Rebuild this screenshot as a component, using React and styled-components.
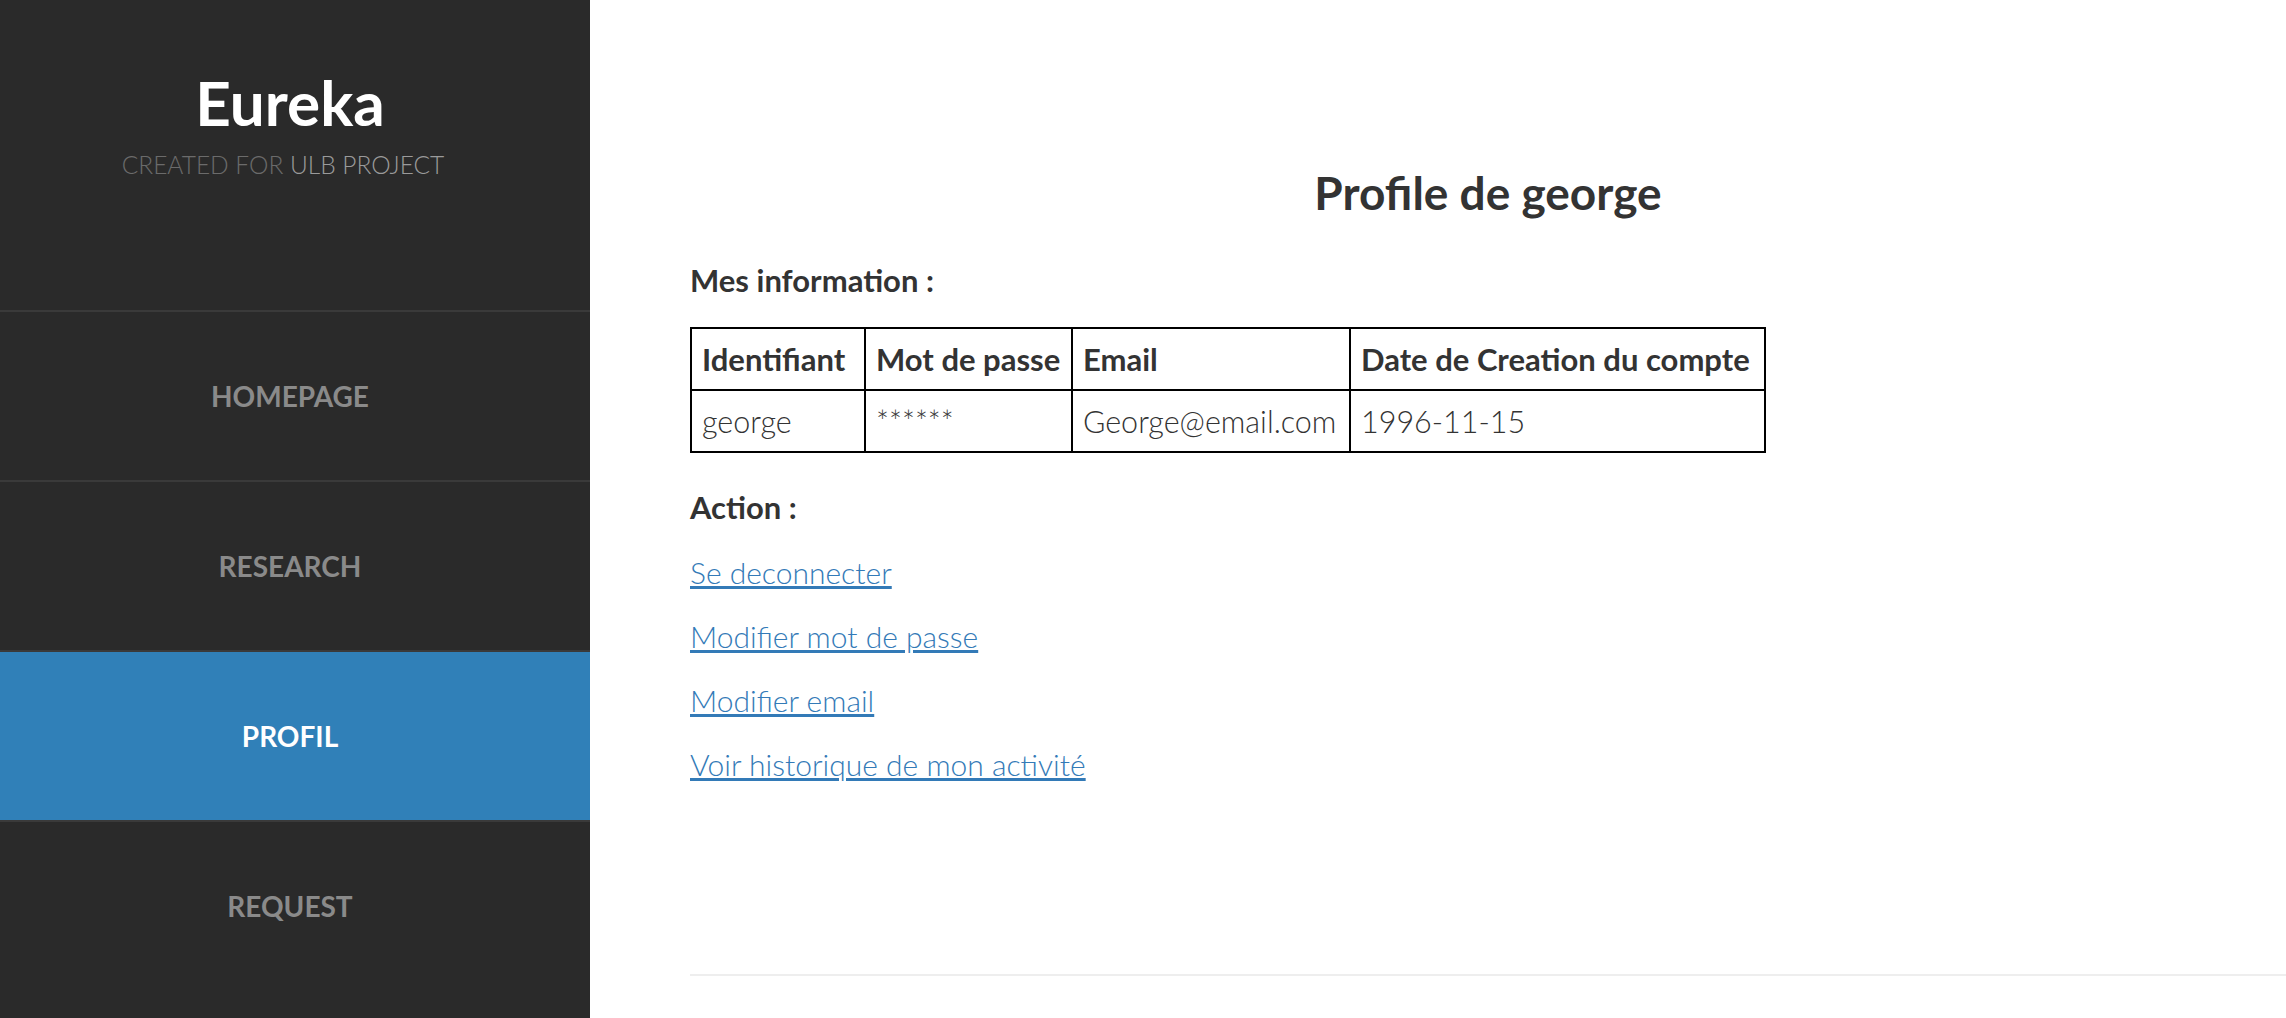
import React from 'react';
import styled, { createGlobalStyle } from 'styled-components';

const GlobalStyle = createGlobalStyle`
    html, body {
        margin: 0;
        padding: 0;
        background: #fff;
        font-family: 'Lato', 'Liberation Sans', sans-serif;
        color: #333;
    }

    * {
        box-sizing: border-box;
    }
`;

const navItems = ['Homepage', 'Research', 'Profil', 'Request'];

const actions = [
    'Se deconnecter',
    'Modifier mot de passe',
    'Modifier email',
    'Voir historique de mon activité'
];

const App = () => {
    return (
        <>
            <GlobalStyle />
            <Page>
                <Sidebar>
                    <Brand>
                        <BrandTitle>Eureka</BrandTitle>
                        <BrandTag>
                            Created for <strong>ULB Project</strong>
                        </BrandTag>
                    </Brand>
                    <NavList>
                        {navItems.map((item) => (
                            <NavItem key={item} $active={item === 'Profil'}>
                                <NavLink href="#">{item}</NavLink>
                            </NavItem>
                        ))}
                    </NavList>
                </Sidebar>

                <Main>
                    <Title>Profile de george</Title>

                    <SectionLabel>Mes information :</SectionLabel>
                    <InfoTable>
                        <colgroup>
                            <col style={{ width: 174 }} />
                            <col style={{ width: 207 }} />
                            <col style={{ width: 278 }} />
                            <col style={{ width: 415 }} />
                        </colgroup>
                        <thead>
                            <tr>
                                <Th>Identifiant</Th>
                                <Th>Mot de passe</Th>
                                <Th>Email</Th>
                                <Th>Date de Creation du compte</Th>
                            </tr>
                        </thead>
                        <tbody>
                            <tr>
                                <Td>george</Td>
                                <Td>******</Td>
                                <Td>George@email.com</Td>
                                <Td>1996-11-15</Td>
                            </tr>
                        </tbody>
                    </InfoTable>

                    <SectionLabel $spaced>Action :</SectionLabel>
                    <ActionList>
                        {actions.map((action) => (
                            <li key={action}>
                                <ActionLink href="#">{action}</ActionLink>
                            </li>
                        ))}
                    </ActionList>

                    <Divider />
                </Main>
            </Page>
        </>
    );
};

export default App;

const Page = styled.div`
    display: flex;
    min-height: 100vh;
`;

const Sidebar = styled.aside`
    width: 590px;
    flex-shrink: 0;
    background-color: #2a2a2a;
`;

const Brand = styled.div`
    height: 310px;
    padding: 71px 10px 0 0;
    text-align: center;
`;

const BrandTitle = styled.h1`
    margin: 0;
    font-size: 62px;
    line-height: 1;
    font-weight: 700;
    color: #fff;
`;

const BrandTag = styled.p`
    margin: 20px 0 0;
    padding-right: 14px;
    font-size: 24.5px;
    line-height: 1;
    font-weight: 300;
    text-transform: uppercase;
    color: #6b6b6b;

    strong {
        font-weight: 300;
        color: #9a9a9a;
    }
`;

const NavList = styled.ul`
    list-style: none;
    margin: 0;
    padding: 0;
`;

const NavItem = styled.li`
    display: flex;
    align-items: center;
    justify-content: center;
    height: 170px;
    padding-right: 10px;
    border-top: 2px solid #3a3a3a;
    background-color: ${({ $active }) => ($active ? '#3080b8' : 'transparent')};

    a {
        color: ${({ $active }) => ($active ? '#fff' : '#8a8a8a')};
    }
`;

const NavLink = styled.a`
    font-size: 28px;
    font-weight: 700;
    text-transform: uppercase;
    text-decoration: none;
`;

const Main = styled.main`
    flex: 1;
    padding: 168px 0 0 100px;
`;

const Title = styled.h2`
    margin: 0;
    font-size: 46px;
    line-height: 1.1;
    font-weight: 700;
    text-align: center;
    color: #333;
`;

const SectionLabel = styled.h4`
    margin: ${({ $spaced }) => ($spaced ? '37px 0 0' : '44px 0 0')};
    font-size: 31px;
    line-height: 1.1;
    font-weight: 700;
    color: #333;
`;

const InfoTable = styled.table`
    margin-top: 30px;
    width: 1074px;
    table-layout: fixed;
    border-collapse: collapse;
    font-size: 30.5px;
    color: #333;
`;

const Th = styled.th`
    padding: 8px 10px 8px;
    border: 2px solid #000;
    line-height: 44px;
    font-size: 31px;
    font-weight: 700;
    text-align: left;
    white-space: nowrap;
`;

const Td = styled.td`
    padding: 8px 10px 8px;
    border: 2px solid #000;
    line-height: 44px;
    font-weight: 300;
    white-space: nowrap;
`;

const ActionList = styled.ul`
    list-style: none;
    margin: 16px 0 0;
    padding: 0;
    font-size: 30px;
    line-height: 64px;
`;

const ActionLink = styled.a`
    font-weight: 300;
    color: #337ab7;
    text-decoration: underline;
`;

const Divider = styled.hr`
    margin: 178px 0 0;
    border: none;
    border-top: 2px solid #eee;
`;
